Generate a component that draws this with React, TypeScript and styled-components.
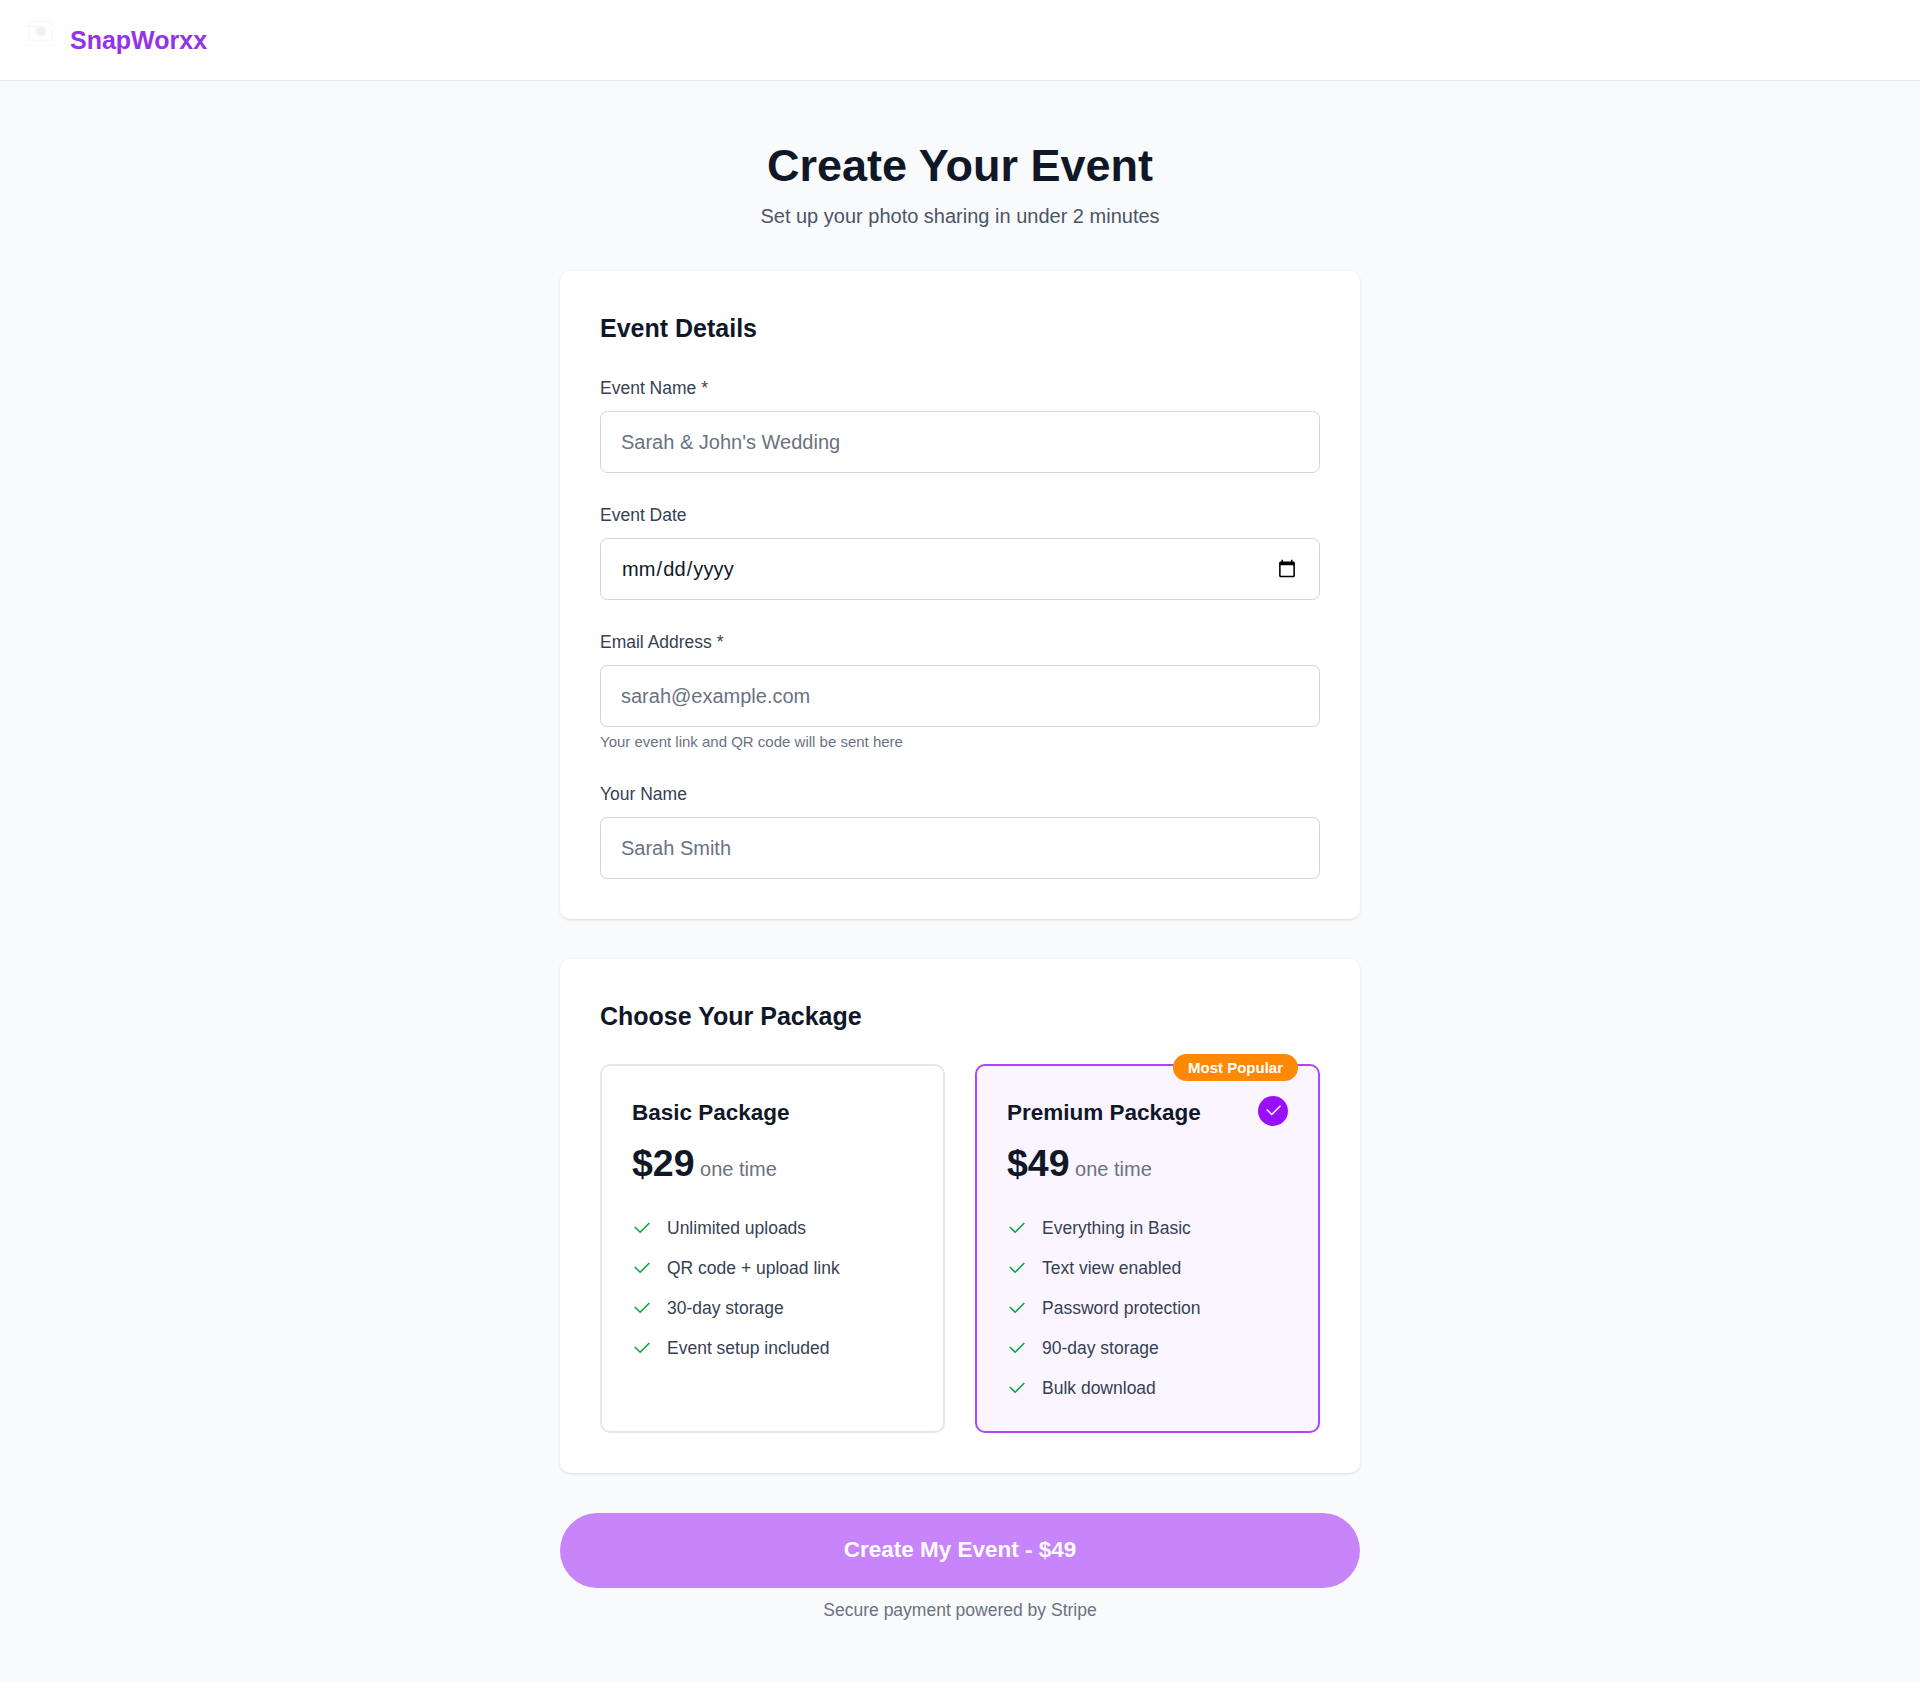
import React from "react";
import styled, { createGlobalStyle } from "styled-components";

const GlobalStyle = createGlobalStyle`
  *, *::before, *::after { box-sizing: border-box; }
  body {
    margin: 0;
    background: #f9fafb;
    color: #101828;
    font-family: "Liberation Sans", Arial, sans-serif;
    font-size: 20px;
    line-height: 30px;
  }
  h1, h2, h3, p, ul { margin: 0; padding: 0; }
  ul { list-style: none; }
`;

const Page = styled.div`
  min-height: 1682px;
`;

const Header = styled.header`
  display: flex;
  align-items: center;
  gap: 10px;
  padding: 20px;
  background: #ffffff;
  border-bottom: 1px solid #e5e7eb;
`;

const LogoMark = styled.svg`
  width: 40px;
  height: 40px;
`;

const Brand = styled.span`
  font-size: 25px;
  line-height: 35px;
  font-weight: 700;
  color: #9333ea;
`;

const Main = styled.main`
  width: 800px;
  margin: 0 auto;
  padding: 60px 0 59px;
`;

const Intro = styled.div`
  display: flex;
  flex-direction: column;
  gap: 10px;
  margin-bottom: 40px;
  text-align: center;
`;

const Title = styled.h1`
  font-size: 45px;
  line-height: 50px;
  font-weight: 700;
`;

const Subtitle = styled.p`
  color: #4a5565;
`;

const Form = styled.form`
  display: flex;
  flex-direction: column;
  gap: 40px;
`;

const Card = styled.section`
  padding: 40px;
  background: #ffffff;
  border-radius: 10px;
  box-shadow: 0 1px 3px rgba(0, 0, 0, 0.1), 0 1px 2px -1px rgba(0, 0, 0, 0.1);
`;

const CardTitle = styled.h2`
  margin-bottom: 30px;
  font-size: 25px;
  line-height: 35px;
  font-weight: 700;
`;

const Fields = styled.div`
  display: flex;
  flex-direction: column;
  gap: 30px;
`;

const FieldBox = styled.div`
  display: flex;
  flex-direction: column;
`;

const Label = styled.label`
  margin-bottom: 10px;
  font-size: 17.5px;
  line-height: 25px;
  color: #364153;
`;

const Input = styled.input`
  width: 100%;
  height: 62px;
  padding: 15px 20px;
  border: 1px solid #d1d5dc;
  border-radius: 7.5px;
  background: #ffffff;
  color: #101828;
  font: inherit;

  &::placeholder {
    color: #6a7282;
    opacity: 1;
  }

  &[type="date"] {
    letter-spacing: 0.1px;
  }
`;

const Hint = styled.p`
  margin-top: 5px;
  font-size: 15px;
  line-height: 20px;
  color: #6a7282;
`;

const Packages = styled.div`
  display: grid;
  grid-template-columns: 1fr 1fr;
  gap: 30px;
`;

const PackageCard = styled.div<{ $selected?: boolean }>`
  position: relative;
  padding: 30px;
  border: 2px solid ${(p) => (p.$selected ? "#ad46ff" : "#e5e7eb")};
  border-radius: 10px;
  background: ${(p) => (p.$selected ? "#faf5ff" : "#ffffff")};
`;

const Badge = styled.span`
  position: absolute;
  top: -12px;
  right: 20px;
  padding: 3.5px 15px;
  border-radius: 999px;
  background: #ff8904;
  color: #ffffff;
  font-size: 15px;
  line-height: 20px;
  font-weight: 700;
`;

const PackageHead = styled.div`
  display: flex;
  align-items: flex-start;
  justify-content: space-between;
  height: 35px;
  margin-bottom: 10px;
`;

const PackageName = styled.h3`
  font-size: 22.5px;
  line-height: 33px;
  font-weight: 700;
`;

const SelectedMark = styled.span`
  display: flex;
  align-items: center;
  justify-content: center;
  width: 30px;
  height: 30px;
  padding-bottom: 1px;
  border-radius: 50%;
  background: #9810fa;
  color: #ffffff;
`;

const PriceRow = styled.div`
  display: flex;
  align-items: baseline;
  gap: 5.5px;
  height: 45px;
  margin-bottom: 30px;
`;

const Price = styled.span`
  font-size: 37.5px;
  line-height: 45px;
  font-weight: 700;
`;

const PriceNote = styled.span`
  color: #6a7282;
`;

const Features = styled.ul`
  display: flex;
  flex-direction: column;
  gap: 15px;
`;

const Feature = styled.li`
  display: flex;
  align-items: center;
  gap: 15px;
  font-size: 17.5px;
  line-height: 25px;
  color: #364153;
`;

const FeatureIcon = styled.span`
  display: flex;
  align-items: center;
  justify-content: center;
  width: 20px;
  height: 20px;
  margin-bottom: 2px;
  color: #00a63e;
`;

const CheckSvg = styled.svg<{ $size: number }>`
  flex: none;
  width: ${(p) => p.$size}px;
  height: ${(p) => p.$size}px;
  fill: none;
  stroke: currentColor;
  stroke-width: 1.75;
`;

const Submit = styled.div`
  text-align: center;
`;

const SubmitButton = styled.button`
  display: block;
  width: 100%;
  padding: 19px 20px 21px;
  border: 0;
  border-radius: 999px;
  background: #9810fa;
  color: #ffffff;
  font-family: inherit;
  font-size: 22.5px;
  line-height: 35px;
  font-weight: 700;
  opacity: 0.5;
`;

const Note = styled.p`
  margin-top: 10px;
  font-size: 17.5px;
  line-height: 25px;
  color: #6a7282;
`;

function Check({ size }: { size: number }) {
  return (
    <CheckSvg viewBox="0 0 24 24" $size={size} aria-hidden="true">
      <path d="M4.2 10.9L10 16.6L20 6.6" />
    </CheckSvg>
  );
}

function Logo() {
  return (
    <LogoMark viewBox="0 0 40 40" fill="none" aria-hidden="true">
      <path
        d="M9 5V4Q9 1.500 11.500 1.500H29.500Q32 1.500 32 4V5M9 8V17.500Q9 20.300 11.500 20.300H27M32 9V20.300H30"
        stroke="#f5f5f6"
        strokeWidth="1.200"
      />
      <path d="M3 6.300H17" stroke="#f4f4f5" strokeWidth="1.100" />
      <circle cx="20.700" cy="11.500" r="6" stroke="#f7f7f7" strokeWidth="1" />
      <circle cx="20.700" cy="11.500" r="4.500" fill="#f0f0f1" />
      <path d="M3 25.300H37" stroke="#fafafa" strokeWidth="2.500" strokeDasharray="2 1.200" />
      <path d="M14 32H27M10 36.800H31" stroke="#fcfcfc" strokeWidth="1.500" strokeDasharray="2 1.500" />
    </LogoMark>
  );
}

interface FieldProps {
  id: string;
  label: string;
  type?: string;
  placeholder?: string;
  hint?: string;
}

function Field({ id, label, type = "text", placeholder, hint }: FieldProps) {
  return (
    <FieldBox>
      <Label htmlFor={id}>{label}</Label>
      <Input id={id} type={type} placeholder={placeholder} />
      {hint && <Hint>{hint}</Hint>}
    </FieldBox>
  );
}

interface PackageProps {
  name: string;
  price: string;
  features: string[];
  selected?: boolean;
  badge?: string;
}

function Package({ name, price, features, selected, badge }: PackageProps) {
  return (
    <PackageCard $selected={selected}>
      {badge && <Badge>{badge}</Badge>}
      <PackageHead>
        <PackageName>{name}</PackageName>
        {selected && (
          <SelectedMark>
            <Check size={21} />
          </SelectedMark>
        )}
      </PackageHead>
      <PriceRow>
        <Price>{price}</Price>
        <PriceNote>one time</PriceNote>
      </PriceRow>
      <Features>
        {features.map((f) => (
          <Feature key={f}>
            <FeatureIcon>
              <Check size={22} />
            </FeatureIcon>
            {f}
          </Feature>
        ))}
      </Features>
    </PackageCard>
  );
}

export default function App() {
  return (
    <Page>
      <GlobalStyle />
      <Header>
        <Logo />
        <Brand>SnapWorxx</Brand>
      </Header>
      <Main>
        <Intro>
          <Title>Create Your Event</Title>
          <Subtitle>Set up your photo sharing in under 2 minutes</Subtitle>
        </Intro>
        <Form onSubmit={(e) => e.preventDefault()}>
          <Card>
            <CardTitle>Event Details</CardTitle>
            <Fields>
              <Field id="event-name" label="Event Name *" placeholder="Sarah & John's Wedding" />
              <Field id="event-date" label="Event Date" type="date" />
              <Field
                id="email"
                label="Email Address *"
                type="email"
                placeholder="sarah@example.com"
                hint="Your event link and QR code will be sent here"
              />
              <Field id="your-name" label="Your Name" placeholder="Sarah Smith" />
            </Fields>
          </Card>
          <Card>
            <CardTitle>Choose Your Package</CardTitle>
            <Packages>
              <Package
                name="Basic Package"
                price="$29"
                features={["Unlimited uploads", "QR code + upload link", "30-day storage", "Event setup included"]}
              />
              <Package
                name="Premium Package"
                price="$49"
                badge="Most Popular"
                selected
                features={[
                  "Everything in Basic",
                  "Text view enabled",
                  "Password protection",
                  "90-day storage",
                  "Bulk download",
                ]}
              />
            </Packages>
          </Card>
          <Submit>
            <SubmitButton type="submit">Create My Event - $49</SubmitButton>
            <Note>Secure payment powered by Stripe</Note>
          </Submit>
        </Form>
      </Main>
    </Page>
  );
}
